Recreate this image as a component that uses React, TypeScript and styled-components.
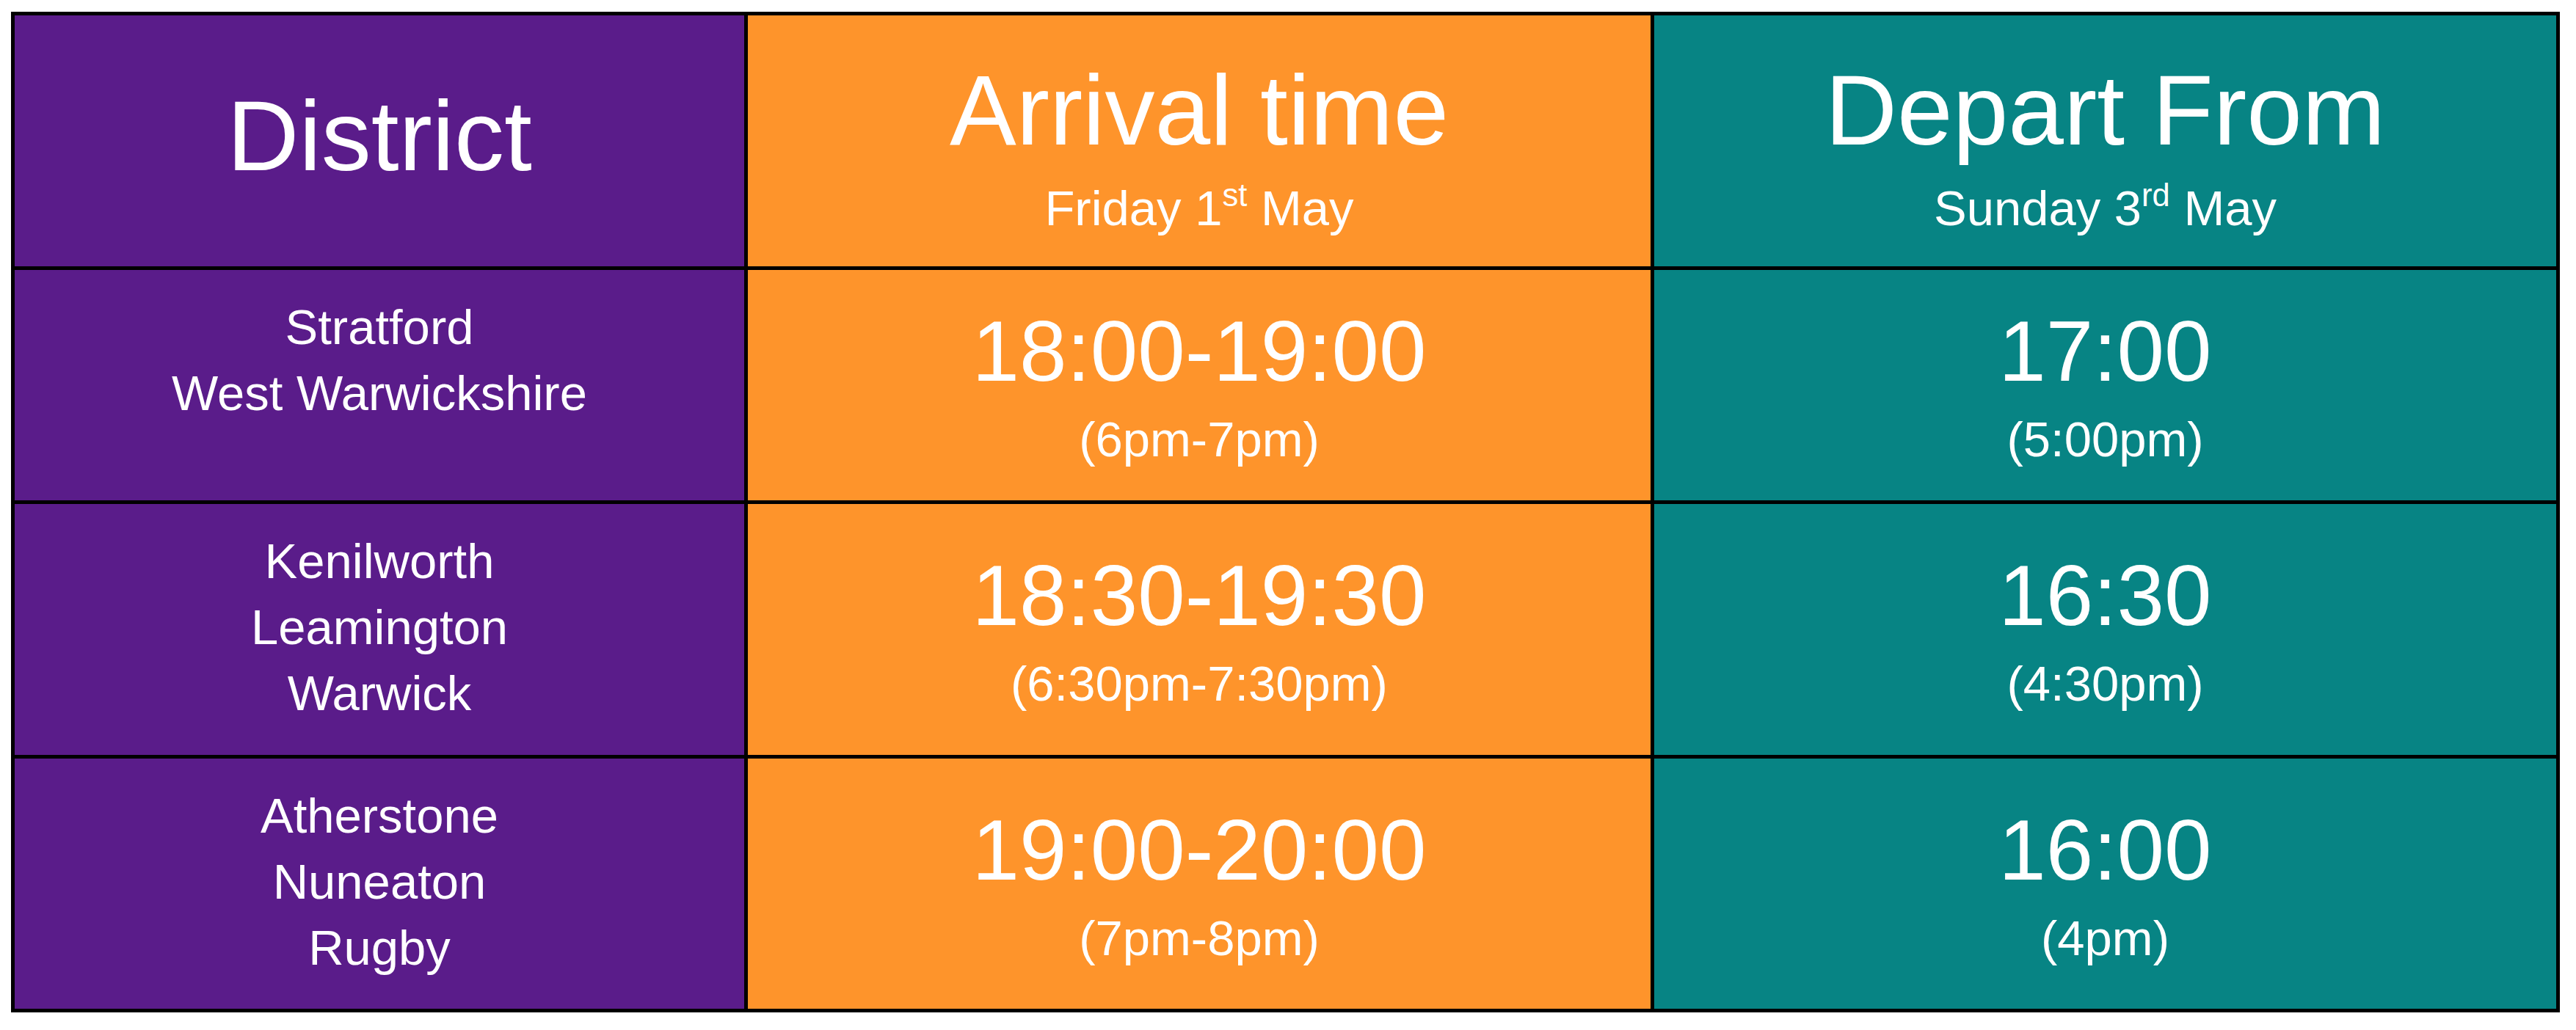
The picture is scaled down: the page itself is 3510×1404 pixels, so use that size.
import styled, { createGlobalStyle } from 'styled-components';

type Tone = 'purple' | 'orange' | 'teal';

const tones: Record<Tone, string> = {
  purple: '#5a1c8a',
  orange: '#fe942b',
  teal: '#078484',
};

const schedule = [
  {
    districts: ['Stratford', 'West Warwickshire'],
    arrival: '18:00-19:00',
    arrivalNote: '(6pm-7pm)',
    depart: '17:00',
    departNote: '(5:00pm)',
  },
  {
    districts: ['Kenilworth', 'Leamington', 'Warwick'],
    arrival: '18:30-19:30',
    arrivalNote: '(6:30pm-7:30pm)',
    depart: '16:30',
    departNote: '(4:30pm)',
  },
  {
    districts: ['Atherstone', 'Nuneaton', 'Rugby'],
    arrival: '19:00-20:00',
    arrivalNote: '(7pm-8pm)',
    depart: '16:00',
    departNote: '(4pm)',
  },
];

const App = () => {
  return (
    <>
      <GlobalStyle />
      <Page>
        <Table>
          <Cell $tone="purple">
            <DistrictTitle>District</DistrictTitle>
          </Cell>
          <Cell $tone="orange">
            <HeaderTitle>Arrival time</HeaderTitle>
            <HeaderSub>
              Friday 1<Sup>st</Sup> May
            </HeaderSub>
          </Cell>
          <Cell $tone="teal">
            <HeaderTitle>Depart From</HeaderTitle>
            <HeaderSub>
              Sunday 3<Sup>rd</Sup> May
            </HeaderSub>
          </Cell>

          {schedule.map((row) => (
            <Row key={row.arrival}>
              <DistrictCell $tone="purple">
                {row.districts.map((name) => (
                  <Place key={name}>{name}</Place>
                ))}
              </DistrictCell>
              <Cell $tone="orange">
                <Time>{row.arrival}</Time>
                <TimeNote>{row.arrivalNote}</TimeNote>
              </Cell>
              <Cell $tone="teal">
                <Time>{row.depart}</Time>
                <TimeNote>{row.departNote}</TimeNote>
              </Cell>
            </Row>
          ))}
        </Table>
      </Page>
    </>
  );
};

export default App;

const GlobalStyle = createGlobalStyle`
  html, body {
    margin: 0;
    padding: 0;
    background: #ffffff;
  }

  body {
    font-family: 'Liberation Sans', Arial, sans-serif;
  }
`;

const Page = styled.div`
  padding: 16px 0 0 15px;
`;

const Table = styled.div`
  display: grid;
  width: 3473px;
  grid-template-columns: 994px 1230px 1229px;
  grid-template-rows: 342px 314px 342px 341px;
  gap: 5px;
  padding: 5px;
  box-sizing: border-box;
  background: #000000;
`;

const Row = styled.div`
  display: contents;
`;

const Cell = styled.div<{ $tone: Tone }>`
  display: flex;
  flex-direction: column;
  align-items: center;
  justify-content: center;
  background: ${(props) => tones[props.$tone]};
  color: #ffffff;
  text-align: center;
`;

const DistrictCell = styled(Cell)`
  justify-content: flex-start;
  padding-top: 33px;
`;

const DistrictTitle = styled.div`
  font-size: 136px;
  line-height: 160px;
  padding-bottom: 14px;
`;

const HeaderTitle = styled.div`
  font-size: 136px;
  line-height: 184px;
`;

const HeaderSub = styled.div`
  font-size: 67px;
  line-height: 84px;
`;

const Sup = styled.span`
  font-size: 0.65em;
  line-height: 0;
  vertical-align: 0.6em;
`;

const Place = styled.div`
  font-size: 67px;
  line-height: 90px;
`;

const Time = styled.div`
  font-size: 116px;
  line-height: 148px;
`;

const TimeNote = styled.div`
  font-size: 67px;
  line-height: 92px;
`;
